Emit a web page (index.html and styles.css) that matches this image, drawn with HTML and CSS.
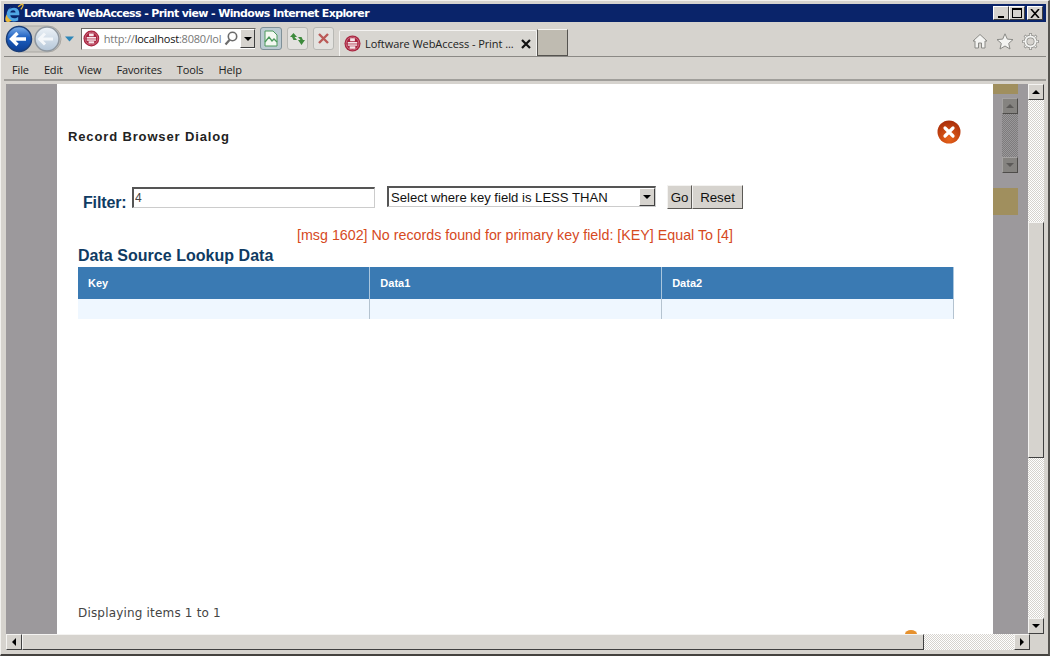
FILE: index.html
```html
<!DOCTYPE html>
<html lang="en">
<head>
<meta charset="utf-8">
<title>Loftware WebAccess - Print view - Windows Internet Explorer</title>
<link rel="stylesheet" href="styles.css">
</head>
<body>
<div class="window">
  <svg class="defs" width="0" height="0" aria-hidden="true">
    <defs>
      <linearGradient id="backFill" x1="0" y1="0" x2="0" y2="1"><stop offset="0" stop-color="#7fb0ea"/><stop offset=".45" stop-color="#1d5fc0"/><stop offset="1" stop-color="#0d3f95"/></linearGradient>
      <linearGradient id="fwdFill" x1="0" y1="0" x2="0" y2="1"><stop offset="0" stop-color="#eef3f8"/><stop offset="1" stop-color="#b4c6d8"/></linearGradient>
      <radialGradient id="closeFill" cx=".5" cy=".8" r=".8"><stop offset="0" stop-color="#e8641a"/><stop offset="1" stop-color="#a82c0a"/></radialGradient>
      <symbol id="favicon" viewBox="0 0 18 18">
        <circle cx="9" cy="9" r="8.500" fill="#a8243f"/>
        <circle cx="9" cy="9" r="6.800" fill="none" stroke="#d98a9a" stroke-width=".7"/>
        <path d="M6.500 3.500h5v3h-5zM4 7.500h10v4H4zM6 12h6v2.500H6z" fill="#f6e6ea"/>
        <path d="M3 9.500h12" stroke="#a8243f" stroke-width=".8"/>
      </symbol>
    </defs>
  </svg>

  <header class="titlebar">
    <svg class="ie-logo" width="19" height="19" viewBox="2 0 18 18" aria-hidden="true">
      <path d="M14.500 3.500c2-2 4-2.800 4.500-2 .5 1-.8 3-2 4.500" fill="none" stroke="#e8b93a" stroke-width="1.300"/>
      <path d="M15.500 11.500H7c.3 3 4.500 4 7.500 1.500v3.500c-5 2.500-11 .5-11-5.500 0-3 2-5.500 4.500-7C6 5 5 6 4.500 7c2-2 6-3.500 8.500-2 2 1.200 2.800 3.500 2.500 6.500zM7 9h5c0-3-4.500-3-5 0z" fill="#4fa6e4"/>
      <path d="M3.500 11c-2 4-1.500 7 1 7 1.500 0 3-.8 4-1.500-2-.5-4-2-5-5.500z" fill="#e8b93a"/>
    </svg>
    <h1 class="title-text">Loftware WebAccess - Print view - Windows Internet Explorer</h1>
    <div class="caption-buttons">
      <button class="caption-btn" aria-label="Minimize"><span class="glyph-min"></span></button>
      <button class="caption-btn" aria-label="Maximize"><span class="glyph-max"></span></button>
      <button class="caption-btn" aria-label="Close">
        <svg width="10" height="9" viewBox="0 0 10 9" aria-hidden="true"><path d="M1 0l8 9M9 0L1 9" stroke="#000" stroke-width="1.600"/></svg>
      </button>
    </div>
  </header>

  <div class="toolbar">
    <svg class="nav-icons" width="76" height="32" viewBox="0 0 76 32" aria-hidden="true">
      <path d="M14 3h30a13 13 0 0 1 0 26H14z" fill="#c9c7c2" stroke="#a9a7a2"/>
      <circle cx="43" cy="16" r="12" fill="url(#fwdFill)" stroke="#8f979f" stroke-width="1.500"/>
      <path d="M36 16h13M41 10.500l-5.500 5.500 5.500 5.500" fill="none" stroke="#f4f7fa" stroke-width="3"/>
      <circle cx="15" cy="16" r="12.500" fill="url(#backFill)" stroke="#1b3e78" stroke-width="1.500"/>
      <path d="M8 16h14M13.500 10l-6 6 6 6" fill="none" stroke="#fff" stroke-width="3.400"/>
      <path d="M61 13.500h9l-4.500 5z" fill="#2d86b8"/>
    </svg>
    <div class="address">
      <svg class="favicon" width="17" height="17" aria-hidden="true"><use href="#favicon"/></svg>
      <span class="url">http://<b>localhost</b>:8080/lol</span>
      <svg class="search" width="14" height="15" viewBox="0 0 14 15" aria-hidden="true"><circle cx="8.500" cy="5.500" r="4.200" fill="none" stroke="#6b6b6b" stroke-width="1.600"/><path d="M5.500 9L1.500 13.500" stroke="#6b6b6b" stroke-width="2.200"/></svg>
      <span class="addr-drop"><i class="tri-down"></i></span>
    </div>
    <button class="tool-btn pressed" aria-label="Compatibility view">
      <svg width="14" height="17" viewBox="0 0 14 17" aria-hidden="true"><path d="M1 1h8l4 4v11H1z" fill="#f3f8f1" stroke="#4c9a5c"/><path d="M1 12l4-5 3 4 2-2 3 3" fill="none" stroke="#4c9a5c" stroke-width="1.300"/></svg>
    </button>
    <button class="tool-btn" aria-label="Refresh">
      <svg width="17" height="14" viewBox="0 0 17 14" aria-hidden="true"><path d="M1 5l3.500-4L8 5H5.500L8 8H4.500L3 5z" fill="#3d8a3c"/><path d="M16 8l-3.500 5L9 8h2.500L9 5h3.500L14 8z" fill="#3d8a3c"/></svg>
    </button>
    <button class="tool-btn" aria-label="Stop">
      <svg width="13" height="13" viewBox="0 0 13 13" aria-hidden="true"><path d="M2 2l9 9M11 2l-9 9" stroke="#bb5a58" stroke-width="2.400"/></svg>
    </button>
    <div class="tab">
      <svg class="favicon" width="17" height="17" aria-hidden="true"><use href="#favicon"/></svg>
      <span class="tab-label">Loftware WebAccess - Print ...</span>
      <svg class="tab-close" width="10" height="10" viewBox="0 0 10 10" aria-hidden="true"><path d="M1 1l8 8M9 1L1 9" stroke="#111" stroke-width="2.200"/></svg>
    </div>
    <div class="new-tab"></div>
    <div class="right-icons">
      <svg width="16" height="16" viewBox="0 0 16 16" aria-hidden="true"><path d="M1 8l7-6.500L15 8h-2v7h-3.500v-5h-3v5H3V8z" fill="#f4f4f2" stroke="#8a8a86"/></svg>
      <svg width="18" height="17" viewBox="0 0 18 17" aria-hidden="true"><path d="M9 .8l2.300 5.300 5.700.5-4.300 3.800 1.300 5.600L9 13l-5 3 1.300-5.600L1 6.600l5.700-.5z" fill="#f4f4f2" stroke="#8a8a86"/></svg>
      <svg width="17" height="17" viewBox="0 0 17 17" aria-hidden="true"><path d="M8.500 0v3M8.500 14v3M0 8.500h3M14 8.500h3M2.500 2.500l2 2M12.500 12.500l2 2M14.500 2.500l-2 2M4.500 12.500l-2 2" stroke="#8a8a86" stroke-width="2.600"/><circle cx="8.500" cy="8.500" r="5" fill="none" stroke="#8a8a86" stroke-width="3.400"/><circle cx="8.500" cy="8.500" r="5" fill="none" stroke="#f4f4f2" stroke-width="2"/><path d="M8.500 .8v2M8.500 14.200v2M.8 8.500h2M14.200 8.500h2M2.900 2.900l1.400 1.400M12.700 12.700l1.400 1.400M14.100 2.900l-1.400 1.400M4.300 12.700l-1.400 1.400" stroke="#f4f4f2" stroke-width="1.300"/></svg>
    </div>
  </div>

  <nav class="menubar">
    <span>File</span><span>Edit</span><span>View</span><span>Favorites</span><span>Tools</span><span>Help</span>
  </nav>

  <main class="viewport">
    <div class="overlay-left"></div>
    <section class="dialog">
      <div class="dialog-head">
        <h2 class="dialog-title">Record Browser Dialog</h2>
        <svg class="dialog-close" width="24" height="24" viewBox="0 0 24 24" aria-label="Close"><circle cx="12" cy="12" r="11.500" fill="url(#closeFill)"/><path d="M8 8l8 8M16 8l-8 8" stroke="#fff" stroke-width="3.200" stroke-linecap="round"/></svg>
      </div>
      <form class="filter">
        <label class="filter-label" for="filter-input">Filter:</label>
        <input class="filter-input" id="filter-input" type="text" value="4">
        <div class="select-wrap">
          <select class="filter-select" aria-label="Match"><option>Select where key field is LESS THAN</option></select>
          <span class="select-arrow"><i class="tri-down"></i></span>
        </div>
        <div class="filter-buttons">
          <button class="form-btn go" type="button">Go</button>
          <button class="form-btn reset" type="button">Reset</button>
        </div>
      </form>
      <p class="error">[msg 1602] No records found for primary key field: [KEY] Equal To [4]</p>
      <h3 class="data-title">Data Source Lookup Data</h3>
      <table class="data-table">
        <thead><tr><th>Key</th><th>Data1</th><th>Data2</th></tr></thead>
        <tbody><tr><td></td><td></td><td></td></tr></tbody>
      </table>
      <p class="count">Displaying items 1 to 1</p>
      <span class="peek"></span>
    </section>
    <aside class="strip">
      <div class="bronze top"></div>
      <div class="inner-scroll">
        <span class="inner-btn"><i class="tri-up dim"></i></span>
        <span class="inner-track"></span>
        <span class="inner-btn"><i class="tri-down dim"></i></span>
      </div>
      <div class="bronze lower"></div>
    </aside>
    <div class="vscroll">
      <span class="sb-btn"><i class="tri-up"></i></span>
      <span class="sb-track short"></span>
      <span class="sb-thumb vthumb"></span>
      <span class="sb-track"></span>
      <span class="sb-btn"><i class="tri-down"></i></span>
    </div>
  </main>

  <div class="hscroll">
    <span class="sb-btn"><i class="tri-left"></i></span>
    <span class="sb-thumb hthumb"></span>
    <span class="sb-track"></span>
    <span class="sb-btn"><i class="tri-right"></i></span>
  </div>
</div>
</body>
</html>
```

FILE: styles.css
```css
* { box-sizing: border-box; }
html, body { margin: 0; height: 100%; overflow: hidden; }
body { background: #d6d3ce; font-family: "Liberation Sans", Arial, sans-serif; }

.window {
  width: 1050px;
  height: 656px;
  display: flex;
  flex-direction: column;
  background: #d6d3ce;
  border-top: 1px solid #f2f1ee;
  border-left: 1px solid #f2f1ee;
  border-right: 2px solid #55534f;
  border-bottom: 2px solid #44423f;
  padding: 3px 2px 0 3px;
}
.defs { position: absolute; }

/* Title bar */
.titlebar {
  height: 18px;
  flex: none;
  background: #0a246a;
  display: flex;
  align-items: center;
  color: #fff;
  position: relative;
  padding-left: 20px;
}
.ie-logo { position: absolute; left: 1px; top: -1px; }
.title-text {
  margin: 0;
  font: bold 11px "DejaVu Sans", sans-serif;
  letter-spacing: -.62px;
  white-space: nowrap;
}
.caption-buttons { margin-left: auto; display: flex; padding-right: 3px; }
.caption-btn {
  width: 16px;
  height: 14px;
  padding: 0;
  background: #d6d3ce;
  border: 1px solid;
  border-color: #fff #404040 #404040 #fff;
  display: flex;
  align-items: center;
  justify-content: center;
}
.caption-btn:last-child { margin-left: 2px; }
.glyph-min { width: 6px; height: 2px; background: #000; align-self: flex-end; margin: 0 0 1px -1px; }
.glyph-max { width: 10px; height: 10px; border: 1px solid #000; border-top-width: 2px; }

/* Toolbar */
.toolbar {
  height: 35px;
  flex: none;
  display: flex;
  align-items: center;
  border-bottom: 1px solid #8b8985;
}
.nav-icons { margin-top: -1px; flex: none; }
.address {
  width: 175px;
  height: 22px;
  margin: -1px 0 0 1px;
  background: #fff;
  border: 1px solid;
  border-color: #6a6864 #d6d3ce #d6d3ce #6a6864;
  display: flex;
  align-items: center;
  padding-left: 1px;
  flex: none;
}
.url {
  margin-left: 4px;
  font: 11px "Open Sans", sans-serif;
  letter-spacing: -.2px;
  color: #777;
  white-space: nowrap;
  width: 121px;
  overflow: hidden;
}
.url b { font-weight: 400; color: #111; }
.search { flex: none; margin-left: 1px; }
.addr-drop {
  width: 15px;
  height: 19px;
  margin-left: 2px;
  background: #d6d3ce;
  border: 1px solid;
  border-color: #fff #404040 #404040 #fff;
  display: flex;
  align-items: center;
  justify-content: center;
  flex: none;
}
.tool-btn {
  width: 21px;
  height: 23px;
  margin: -1px 0 0 5px;
  padding: 0;
  background: #e3e2df;
  border: 1px solid #b8b8b4;
  border-radius: 3px;
  display: flex;
  align-items: center;
  justify-content: center;
  flex: none;
}
.tool-btn.pressed { width: 22px; background: #bccbd2; border-color: #7f9098; margin-left: 4px; }
.tab {
  width: 198px;
  height: 26px;
  margin: 8px 0 -1px 5px;
  align-self: flex-start;
  background: #d8d6d1;
  border: 1px solid #f4f3f1;
  border-bottom: 0;
  border-radius: 2px 2px 0 0;
  display: flex;
  align-items: center;
  padding-left: 4px;
  flex: none;
}
.tab-label {
  margin-left: 4px;
  font: 11px "Open Sans", sans-serif;
  letter-spacing: -.07px;
  color: #222;
  white-space: nowrap;
}
.tab-close { margin-left: auto; margin-right: 5px; }
.new-tab {
  width: 31px;
  height: 27px;
  margin: 7px 0 -1px 0;
  align-self: flex-start;
  background: #bfbbb1;
  border: 1px solid;
  border-color: #f4f3f1 #55534f #55534f #55534f;
  flex: none;
}
.right-icons {
  margin: 4px 7px 0 auto;
  display: flex;
  align-items: center;
  gap: 8px;
}

/* Menu bar */
.menubar {
  height: 24px;
  flex: none;
  display: flex;
  align-items: center;
  gap: 15px;
  padding: 2px 0 0 8px;
  border-bottom: 2px solid #a09e9a;
  font: 11px "Open Sans", sans-serif;
  letter-spacing: -.13px;
  color: #1c1c1c;
}

/* Browser viewport */
.viewport {
  height: 550px;
  flex: none;
  margin-top: 3px;
  margin-left: 2px;
  display: flex;
}
.overlay-left { width: 51px; flex: none; background: #9c999c; }
.dialog {
  width: 936px;
  flex: none;
  background: #fff;
  display: flex;
  flex-direction: column;
  position: relative;
}
.dialog-head {
  height: 63px;
  padding: 36px 32px 0 11px;
  display: flex;
  justify-content: space-between;
  align-items: flex-start;
}
.dialog-title {
  margin: 9px 0 0;
  font: bold 13px "Liberation Sans", Arial, sans-serif;
  letter-spacing: .86px;
  color: #222;
}
.dialog-close { flex: none; }
.filter {
  height: 40px;
  margin-top: 38px;
  padding-left: 26px;
  display: flex;
  align-items: flex-start;
}
.filter-label {
  width: 49px;
  flex: none;
  margin-top: 9px;
  font: bold 16px "Liberation Sans", Arial, sans-serif;
  letter-spacing: -.15px;
  color: #0f3b63;
}
.filter-input {
  width: 243px;
  height: 21px;
  flex: none;
  margin: 2px 0 0;
  padding: 0 1px;
  background: #fff;
  border: 2px solid;
  border-color: #555 #ccc #ccc #555;
  border-width: 2px 1px 1px 2px;
  font: 12px "Liberation Sans", Arial, sans-serif;
  color: #444;
}
.select-wrap { position: relative; margin: 1px 0 0 12px; flex: none; }
.filter-select {
  display: block;
  width: 269px;
  height: 21px;
  padding: 0 18px 0 2px;
  appearance: none;
  background: #fff;
  border: 2px solid;
  border-color: #555 #ccc #ccc #555;
  border-width: 2px 1px 1px 2px;
  border-radius: 0;
  font: 13.1px "Liberation Sans", Arial, sans-serif;
  color: #111;
}
.select-arrow {
  position: absolute;
  right: 1px;
  top: 2px;
  width: 16px;
  height: 18px;
  background: #d6d3ce;
  border: 1px solid;
  border-color: #fff #404040 #404040 #fff;
  display: flex;
  align-items: center;
  justify-content: center;
}
.filter-buttons { display: flex; margin-left: 11px; }
.form-btn {
  height: 24px;
  padding: 0;
  background: #d6d3ce;
  border: 1px solid;
  border-color: #f4f3f1 #5c5a56 #5c5a56 #f4f3f1;
  font: 13.3px "Liberation Sans", Arial, sans-serif;
  color: #111;
}
.go { width: 25px; }
.reset { width: 51px; }
.error {
  margin: 1px 0 0 240px;
  height: 18px;
  font: 14.27px/18px "Liberation Sans", Arial, sans-serif;
  color: #d64a1e;
  white-space: nowrap;
}
.data-title {
  margin: 2px 0 0 21px;
  height: 19px;
  font: bold 16px/20px "Liberation Sans", Arial, sans-serif;
  letter-spacing: .03px;
  color: #0f3b63;
}
.data-table {
  width: 876px;
  margin: 2px 0 0 21px;
  border-collapse: collapse;
  table-layout: fixed;
}
.data-table th {
  height: 32px;
  padding: 0 0 0 10px;
  background: #3a7ab3;
  border-right: 1px solid #a9c6de;
  text-align: left;
  font: bold 11px "Liberation Sans", Arial, sans-serif;
  color: #fff;
}
.data-table td {
  height: 20px;
  padding: 0;
  background: #eff7ff;
  border-right: 1px solid #b4c3d0;
}
.count {
  margin: auto 0 14px 21px;
  font: 12px "DejaVu Sans", sans-serif;
  letter-spacing: .18px;
  color: #444;
}
.peek {
  position: absolute;
  left: 848px;
  bottom: 0;
  width: 12px;
  height: 4px;
  background: #e6912e;
  border-radius: 50% 50% 0 0 / 100% 100% 0 0;
}

/* Gray strip with the dimmed scrollbar behind the overlay */
.strip {
  width: 35px;
  flex: none;
  background: #9c999c;
  position: relative;
}
.bronze { position: absolute; left: 0; width: 25px; background: #a08f5e; }
.bronze.top { top: 0; height: 10px; }
.bronze.lower { top: 104px; height: 27px; }
.inner-scroll {
  position: absolute;
  left: 9px;
  top: 14px;
  width: 16px;
  height: 75px;
  display: flex;
  flex-direction: column;
}
.inner-btn {
  height: 16px;
  flex: none;
  background: #858380;
  border: 1px solid;
  border-color: #a5a3a2 #4e4c4a #4e4c4a #a5a3a2;
  display: flex;
  align-items: center;
  justify-content: center;
}
.inner-track {
  flex: 1;
  background: repeating-conic-gradient(#7d7b7c 0 25%, #9a989a 0 50%) 0 0 / 2px 2px;
}

/* Scrollbars */
.vscroll {
  width: 16px;
  flex: none;
  display: flex;
  flex-direction: column;
  background: #d6d3ce;
}
.hscroll {
  height: 16px;
  flex: none;
  margin: 0 16px 0 2px;
  display: flex;
}
.sb-btn {
  width: 16px;
  height: 16px;
  flex: none;
  background: #d6d3ce;
  border: 1px solid;
  border-color: #f4f3f1 #404040 #404040 #f4f3f1;
  display: flex;
  align-items: center;
  justify-content: center;
}
.sb-track {
  flex: 1;
  background: repeating-conic-gradient(#fff 0 25%, #d6d3ce 0 50%) 0 0 / 2px 2px;
}
.sb-track.short { flex: none; height: 122px; }
.sb-thumb {
  flex: none;
  background: #d6d3ce;
  border: 1px solid;
  border-color: #f4f3f1 #404040 #404040 #f4f3f1;
}
.vthumb { height: 236px; }
.hthumb { width: 902px; }

/* Arrow glyphs */
.tri-down, .tri-up, .tri-left, .tri-right { display: block; width: 0; height: 0; border-style: solid; border-color: transparent; }
.tri-down { border-width: 4px 4px 0; border-top-color: #000; }
.tri-up { border-width: 0 4px 4px; border-bottom-color: #000; }
.tri-left { border-width: 4px 4px 4px 0; border-right-color: #000; }
.tri-right { border-width: 4px 0 4px 4px; border-left-color: #000; }
.dim.tri-down { border-top-color: #5c5a58; }
.dim.tri-up { border-bottom-color: #5c5a58; }
```
